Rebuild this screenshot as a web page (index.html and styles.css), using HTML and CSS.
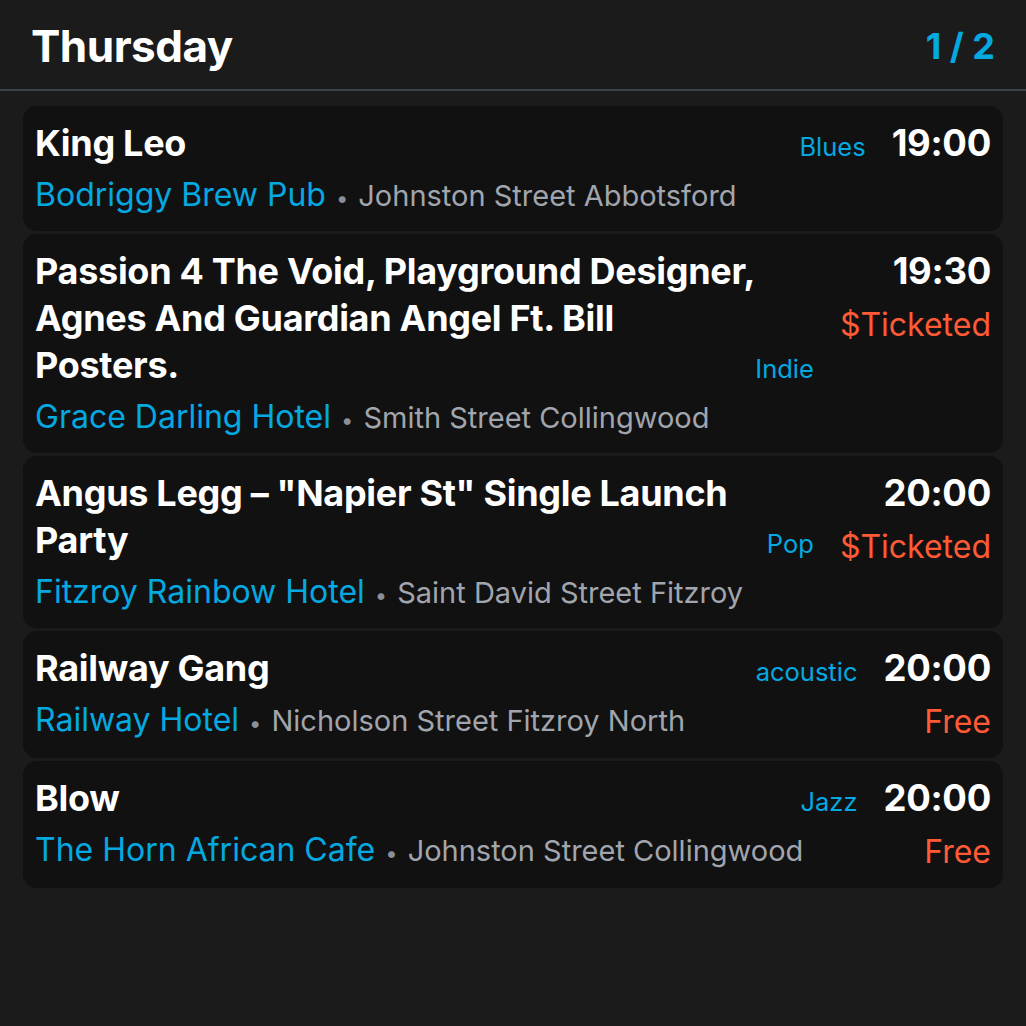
FILE: index.html
```html
<!DOCTYPE html>
<html>
<head>
<meta charset="utf-8">
<link rel="stylesheet" href="styles.css">
</head>
<body>
<div class="screen">
  <header class="header">
    <h1 class="day">Thursday</h1>
    <div class="pager">1 / 2</div>
  </header>
  <main class="list">
    <article class="card">
      <div class="main">
        <div class="title-row">
          <div class="title">King Leo</div>
          <div class="genre">Blues</div>
        </div>
        <div class="venue-row"><span class="venue">Bodriggy Brew Pub</span><span class="dot">•</span><span class="addr">Johnston Street Abbotsford</span></div>
      </div>
      <div class="side">
        <div class="time">19:00</div>
      </div>
    </article>
    <article class="card">
      <div class="main">
        <div class="title-row">
          <div class="title">Passion 4 The Void, Playground Designer, Agnes And Guardian Angel Ft. Bill Posters.</div>
          <div class="genre">Indie</div>
        </div>
        <div class="venue-row"><span class="venue">Grace Darling Hotel</span><span class="dot">•</span><span class="addr">Smith Street Collingwood</span></div>
      </div>
      <div class="side">
        <div class="time">19:30</div>
        <div class="price">$Ticketed</div>
      </div>
    </article>
    <article class="card">
      <div class="main">
        <div class="title-row">
          <div class="title">Angus Legg – "Napier St" Single Launch Party</div>
          <div class="genre">Pop</div>
        </div>
        <div class="venue-row"><span class="venue">Fitzroy Rainbow Hotel</span><span class="dot">•</span><span class="addr">Saint David Street Fitzroy</span></div>
      </div>
      <div class="side">
        <div class="time">20:00</div>
        <div class="price">$Ticketed</div>
      </div>
    </article>
    <article class="card">
      <div class="main">
        <div class="title-row">
          <div class="title">Railway Gang</div>
          <div class="genre">acoustic</div>
        </div>
        <div class="venue-row"><span class="venue">Railway Hotel</span><span class="dot">•</span><span class="addr">Nicholson Street Fitzroy North</span></div>
      </div>
      <div class="side">
        <div class="time">20:00</div>
        <div class="price">Free</div>
      </div>
    </article>
    <article class="card">
      <div class="main">
        <div class="title-row">
          <div class="title">Blow</div>
          <div class="genre">Jazz</div>
        </div>
        <div class="venue-row"><span class="venue">The Horn African Cafe</span><span class="dot">•</span><span class="addr">Johnston Street Collingwood</span></div>
      </div>
      <div class="side">
        <div class="time">20:00</div>
        <div class="price">Free</div>
      </div>
    </article>
  </main>
</div>
</body>
</html>
```

FILE: styles.css
```css
* { box-sizing: border-box; }
html, body {
  margin: 0;
  padding: 0;
  background: #1b1b1b;
  width: 1026px;
  height: 1026px;
  overflow: hidden;
}
body {
  font-family: Inter, "Noto Sans", sans-serif;
  color: #ffffff;
}
.header {
  height: 91px;
  display: flex;
  align-items: center;
  justify-content: space-between;
  padding: 2px 31px 0 31px;
  border-bottom: 2px solid #3a404d;
}
.day {
  margin: 0;
  font-size: 44px;
  font-weight: 700;
  letter-spacing: -0.5px;
}
.pager {
  font-size: 36px;
  font-weight: 700;
  color: #03a9e0;
}
.list {
  padding: 15px 23px 0 23px;
  display: flex;
  flex-direction: column;
  gap: 3px;
}
.card {
  background: #111111;
  border-radius: 14px;
  padding: 14px 12px 13px 12px;
  display: flex;
  align-items: flex-start;
  gap: 26px;
}
.main {
  flex: 1;
  min-width: 0;
}
.title-row {
  display: flex;
  align-items: last baseline;
  gap: 0;
}
.title {
  flex: 1;
  font-size: 36px;
  font-weight: 700;
  line-height: 47px;
  letter-spacing: -0.3px;
}
.genre {
  font-size: 25.5px;
  line-height: 32px;
  color: #03a9e0;
}
.venue-row {
  margin-top: 5px;
  height: 46px;
  font-size: 32px;
  line-height: 46px;
  white-space: nowrap;
}
.venue-row span {
  line-height: 1;
}
.venue {
  font-size: 32px;
  color: #03a9e0;
}
.dot {
  font-size: 22px;
  color: #8a8f99;
  margin: 0 10px;
}
.addr {
  font-size: 29px;
  color: #a1a5ad;
}
.side {
  display: flex;
  flex-direction: column;
  align-items: flex-end;
}
.time {
  font-size: 36.5px;
  font-weight: 700;
  line-height: 47px;
  letter-spacing: -0.3px;
}
.price {
  margin-top: 6px;
  font-size: 32px;
  line-height: 47px;
  color: #ff5a36;
}
```
